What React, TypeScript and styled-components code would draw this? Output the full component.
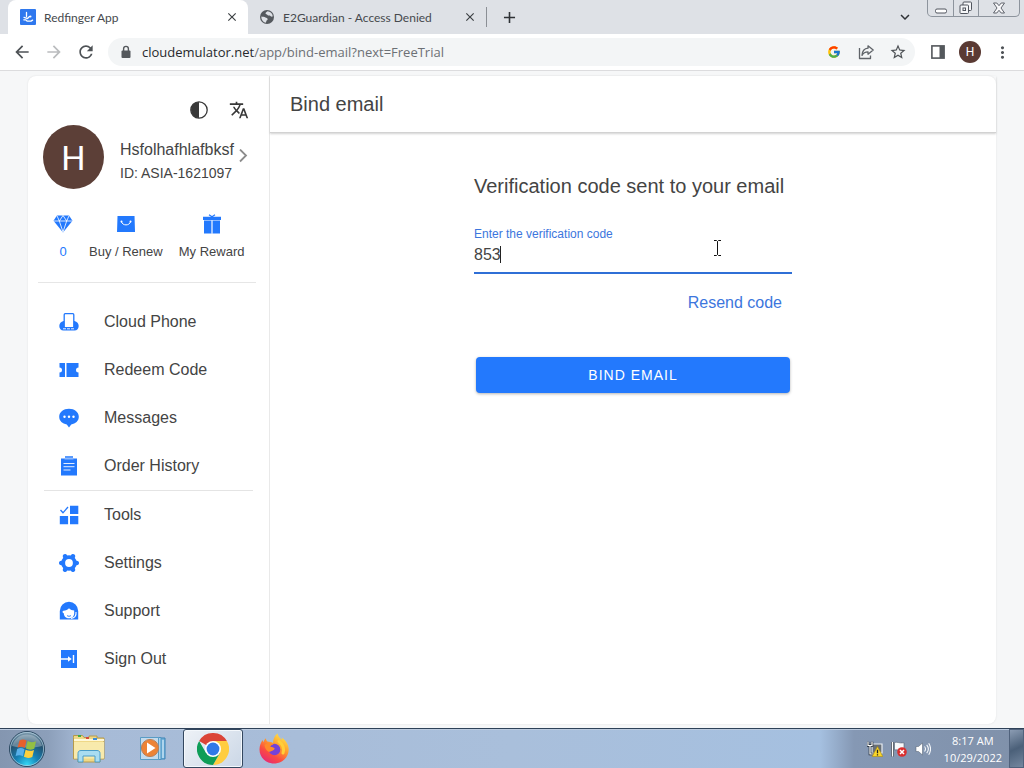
import React, { useState } from "react";
import styled, { createGlobalStyle } from "styled-components";
import {
  MdArrowBack,
  MdArrowForward,
  MdRefresh,
  MdStarBorder,
  MdMoreVert,
  MdTranslate,
  MdClose,
  MdAdd,
  MdKeyboardArrowDown,
} from "react-icons/md";
import { FcGoogle } from "react-icons/fc";

const BLUE = "#2379fd";
const UI_FONT = `"Open Sans", "Noto Sans", sans-serif`;

const GlobalStyle = createGlobalStyle`
  *, *::before, *::after { box-sizing: border-box; }
  body {
    margin: 0;
    color: #444444;
    font-family: "Liberation Sans", Arial, sans-serif;
    font-size: 16px;
  }
  button, input { font: inherit; color: inherit; border: 0; padding: 0; background: none; }
  a { text-decoration: none; color: inherit; }
  svg { display: block; flex: none; }
  h1, h2, p, ul { margin: 0; padding: 0; font-weight: 400; }
`;

const Screen = styled.div`
  display: flex;
  flex-direction: column;
  min-height: 100vh;
`;

/* Browser chrome */

const TabStrip = styled.div`
  display: flex;
  height: 34px;
  padding-left: 8px;
  background: #dee1e6;
  font-family: Lato, "Open Sans", sans-serif;
  font-size: 12px;
`;

const Tab = styled.div<{ $active?: boolean }>`
  display: flex;
  align-items: center;
  gap: 8px;
  width: ${(p) => (p.$active ? 240 : 238)}px;
  padding: 0 9px 0 ${(p) => (p.$active ? 12 : 11)}px;
  color: #46494d;
  background: ${(p) => (p.$active ? "#ffffff" : "transparent")};
  border-radius: 8px 8px 0 0;
`;

const TabTitle = styled.span`
  flex: 1;
  white-space: nowrap;
  overflow: hidden;
`;

const TabClose = styled.button`
  display: grid;
  place-items: center;
  width: 14px;
  height: 14px;
  color: #3c4043;
`;

const TabDivider = styled.span`
  align-self: center;
  width: 1px;
  height: 20px;
  background: #8b8f95;
`;

const StripButton = styled.button`
  display: grid;
  place-items: center;
  width: 44px;
  color: #2f3236;
`;

const StripSpacer = styled.div`
  flex: 1;
`;

const WindowControls = styled.div`
  display: flex;
  height: 17px;
  margin: 0 4px 0 0;
  border: 1px solid #8d949d;
  border-top: 0;
  border-radius: 0 0 5px 5px;
`;

const WindowButton = styled.button<{ $width: number }>`
  display: grid;
  place-items: center;
  width: ${(p) => p.$width}px;
  & + & {
    border-left: 1px solid #8d949d;
  }
`;

const Toolbar = styled.div`
  display: flex;
  align-items: center;
  height: 37px;
  padding: 0 6px;
  background: #ffffff;
  border-bottom: 1px solid #dcdcde;
`;

const ToolButton = styled.button<{ $faded?: boolean }>`
  display: grid;
  place-items: center;
  width: 32px;
  height: 28px;
  color: ${(p) => (p.$faded ? "#babcbe" : "#4e5256")};
`;

const Omnibox = styled.div`
  display: flex;
  flex: 1;
  align-items: center;
  height: 28px;
  margin: 0 7px 0 6px;
  padding: 0 1px 0 11px;
  border-radius: 14px;
  background: #f3f5f6;
  color: #5f6368;
`;

const Address = styled.p`
  flex: 1;
  margin-left: 9px;
  font-family: ${UI_FONT};
  font-size: 13px;
  line-height: 20px;
  color: #6c7075;
  b {
    font-weight: 400;
    color: #27292c;
  }
`;

const UserBadge = styled.span`
  display: grid;
  place-items: center;
  width: 22px;
  height: 22px;
  border-radius: 50%;
  background: #5a3a33;
  color: #ffffff;
  font-family: Roboto, sans-serif;
  font-size: 12px;
`;

/* Web page */

const Page = styled.div`
  display: flex;
  flex: 1;
  padding: 5px 28px 4px;
  background: #f6f7f8;
`;

const Card = styled.div`
  display: flex;
  flex: 1;
  border-radius: 8px;
  background: #ffffff;
  box-shadow: 0 0 2px rgba(0, 0, 0, 0.1);
`;

const Sidebar = styled.aside`
  width: 242px;
  padding-top: 24px;
  border-right: 1px solid #e9e9e9;
`;

const QuickActions = styled.div`
  display: flex;
  justify-content: flex-end;
  gap: 20px;
  padding-right: 20px;
`;

const IconButton = styled.button`
  display: grid;
  place-items: center;
  width: 20px;
  height: 20px;
`;

const Profile = styled.button`
  display: flex;
  align-items: center;
  width: 100%;
  margin-top: 5px;
  padding-left: 15px;
  text-align: left;
`;

const Avatar = styled.span`
  display: grid;
  place-items: center;
  width: 61px;
  height: 64px;
  padding-top: 2px;
  border-radius: 50%;
  background: #5c3f37;
  color: #ffffff;
  font-family: Roboto, sans-serif;
  font-size: 34px;
`;

const ProfileText = styled.span`
  display: flex;
  flex-direction: column;
  margin-left: 16px;
  padding-top: 8px;
  line-height: 24px;
  small {
    font-size: 14px;
    line-height: 22px;
  }
`;

const Stats = styled.div`
  display: flex;
  gap: 16px;
  margin: 25px 13px 0 10px;
  padding: 0 0 21px 15px;
  border-bottom: 1px solid #e6e6e6;
`;

const Stat = styled.a<{ $accent?: boolean }>`
  display: flex;
  flex-direction: column;
  align-items: center;
  gap: 9px;
  color: ${(p) => (p.$accent ? BLUE : "#444444")};
  font-size: 13px;
  line-height: 18px;
  white-space: nowrap;
`;

const NavList = styled.ul<{ $divided?: boolean }>`
  list-style: none;
  margin: ${(p) => (p.$divided ? "0" : "15px")} 16px 0;
  border-top: ${(p) => (p.$divided ? "1px solid #e4e4e4" : "0")};
`;

const NavLink = styled.a`
  display: flex;
  align-items: center;
  gap: 25px;
  height: 48px;
  padding-left: 15px;
`;

const Main = styled.main`
  flex: 1;
`;

const PageHeader = styled.header`
  display: flex;
  align-items: center;
  height: 57px;
  padding-left: 20px;
  border-bottom: 1px solid #d2d2d2;
  box-shadow: 0 1px 2px rgba(0, 0, 0, 0.18);
`;

const PageTitle = styled.h1`
  font-size: 20px;
  line-height: 28px;
`;

const Form = styled.form`
  display: flex;
  flex-direction: column;
  width: 318px;
  margin: 39px auto 0;
`;

const FormTitle = styled.h2`
  font-size: 20px;
  line-height: 28px;
  white-space: nowrap;
`;

const Field = styled.div`
  position: relative;
  display: flex;
  flex-direction: column;
  margin-top: 26px;
  border-bottom: 2px solid #2f6fd6;
`;

const FieldLabel = styled.label`
  color: #3c76dd;
  font-size: 12px;
  line-height: 16px;
`;

const CodeInput = styled.input`
  height: 30px;
  padding-bottom: 4px;
  outline: none;
  caret-color: transparent;
`;

const Caret = styled.span`
  position: absolute;
  left: 26px;
  top: 20px;
  width: 1px;
  height: 17px;
  background: #222222;
`;

const Pointer = styled.svg`
  position: absolute;
  left: 239px;
  top: 14px;
`;

const ResendLink = styled.a`
  align-self: flex-end;
  margin: 17px 10px 0 0;
  color: #3c76dd;
  line-height: 24px;
`;

const SubmitButton = styled.button`
  height: 36px;
  margin: 42px 2px 0;
  border-radius: 4px;
  background: ${BLUE};
  color: #ffffff;
  font-size: 14px;
  letter-spacing: 1px;
  box-shadow: 0 1px 3px rgba(0, 0, 0, 0.3);
`;

/* Desktop taskbar */

const Taskbar = styled.footer`
  display: flex;
  align-items: stretch;
  height: 40px;
  border-top: 1px solid #2e4158;
  background: linear-gradient(
    90deg,
    #8496b0 0,
    #8c9fba 48px,
    #a7bbd7 84px,
    #a9bfdb 50%,
    #a5c0e0 calc(100% - 204px),
    #8598b4 calc(100% - 170px),
    #8091aa 100%
  );
  box-shadow: inset 0 1px 0 #bccbdf;
`;

const TaskButton = styled.button<{ $width: number; $open?: boolean }>`
  display: grid;
  place-items: center;
  width: ${(p) => p.$width}px;
  border: ${(p) => (p.$open ? "1px solid #33475f" : "0")};
  border-radius: 3px;
  background: ${(p) =>
    p.$open ? "linear-gradient(135deg, #eef2f7, #cbd7e6)" : "none"};
  box-shadow: ${(p) => (p.$open ? "inset 0 0 0 1px #f4f8fc" : "none")};
`;

const Tray = styled.div`
  display: flex;
  align-items: center;
  gap: 8px;
  margin-left: auto;
  margin-right: 13px;
`;

const Clock = styled.time`
  display: flex;
  flex-direction: column;
  align-items: center;
  justify-content: center;
  margin-right: 7px;
  color: #ffffff;
  font-family: ${UI_FONT};
  font-size: 11px;
  line-height: 17px;
`;

const ShowDesktop = styled.button`
  width: 15px;
  border: 1px solid #50627c;
  background: linear-gradient(155deg, #8b9cb3, #4b6079 50%, #74879f);
`;

/* Drawings */

const icon20 = { width: 20, height: 20, viewBox: "0 0 20 20", fill: BLUE };

const AppFavicon = () => (
  <svg width="16" height="16" viewBox="0 0 16 16">
    <rect width="16" height="16" rx="1" fill="#2f78ee" />
    <path d="M6.500 3.500v4M4 8.300l3.500 1.200 2-2M3.800 10.800h2l1.300 1.300h4l1.500-1" stroke="#fff" strokeWidth="1.300" fill="none" strokeLinecap="round" />
    <circle cx="10.500" cy="7.500" r="1" fill="#fff" />
  </svg>
);

const Globe = () => (
  <svg width="16" height="16" viewBox="0 0 16 16">
    <circle cx="8" cy="8" r="7" fill="#55595e" />
    <path d="M8.500 2.300c2.800.3 5 2.300 5.300 5-1 .7-2.300.2-2.800-.8-.8-.2-1.800.3-2.500-.5-.6-.8-1.600-.6-2-1.500.1-1 1.200-1.300 2-2.200ZM2.300 7.500c1.500.2 3 .3 4.200 1 .8.6 2 .5 2.200 1.500 0 1-1.200 1.300-1.400 2.200-.1.600-.2 1.200-.8 1.500C4 13 2.100 10.800 2.300 7.500Z" fill="#dee1e6" />
  </svg>
);

const Padlock = () => (
  <svg width="14" height="14" viewBox="0 0 14 14">
    <rect x="2.500" y="5.500" width="9" height="7.500" rx="1" fill="#54585c" />
    <path d="M4.600 6V3.800a2.400 2.400 0 0 1 4.800 0V6" fill="none" stroke="#54585c" strokeWidth="1.400" />
  </svg>
);

const Share = () => (
  <svg width="18" height="18" viewBox="0 0 18 18" fill="none" stroke="#5f6368" strokeWidth="1.300" strokeLinejoin="round">
    <path d="M2.500 5v10.500h11v-3" />
    <path d="M11 2.800 16.200 7 11 11.200V8.800C8 8.800 6.200 10 5 12.400 5.200 8.400 7.200 5.600 11 5.200Z" />
  </svg>
);

const SidePanel = () => (
  <svg width="14" height="14" viewBox="0 0 14 14">
    <rect x="0.900" y="0.900" width="12.200" height="12.200" fill="none" stroke="#54585c" strokeWidth="1.600" />
    <path d="M8.500 1H13v12H8.500z" fill="#54585c" />
  </svg>
);

const Contrast = () => (
  <svg width="18" height="18" viewBox="0 0 18 18">
    <circle cx="9" cy="9" r="8.200" fill="none" stroke="#383838" strokeWidth="1.300" />
    <path d="M9 1a8 8 0 0 0 0 16Z" fill="#383838" />
  </svg>
);

const Diamond = () => (
  <svg {...icon20}>
    <path d="M4 1.500h12l3.500 5.300L10 18.500.5 6.800Z" />
    <path d="M.5 7h19M4 1.800 6.300 7 10 18 13.700 7 16 1.800M6.300 7 10 1.500 13.700 7" fill="none" stroke="#fff" strokeWidth="0.800" />
  </svg>
);

const Bag = () => (
  <svg {...icon20}>
    <path d="M1.500 2h17l.5 16H1Z" />
    <path d="M5.500 8c1 4 8 4 9 0" fill="none" stroke="#fff" strokeWidth="1" strokeLinecap="round" />
    <circle cx="5.500" cy="7.500" r="1" fill="#fff" />
    <circle cx="14.500" cy="7.500" r="1" fill="#fff" />
  </svg>
);

const Gift = () => (
  <svg {...icon20}>
    <path d="M1 2.800h18v3.200H1zM2 6.600h7.500V19.500H2zM10.500 6.600H18V19.500h-7.500z" />
    <path d="M7 .8 10 2.800 13 .8" fill="none" stroke={BLUE} strokeWidth="1.200" />
    <path d="M10 6v13.500" stroke="#b5d1ff" strokeWidth="1" />
  </svg>
);

const CloudPhone = () => (
  <svg {...icon20}>
    <path d="M4.500 9C2 9.500.3 11.500.3 14c0 2.600 1.700 4.500 4.200 4.500h11c2.500 0 4.200-1.900 4.200-4.500 0-2.500-1.700-4.500-4.200-5Z" />
    <rect x="5.200" y="1.700" width="9.600" height="14" rx="1" fill="#fff" stroke={BLUE} strokeWidth="1.300" />
    <path d="M4 16.800h12" stroke="#fff" strokeWidth="0.900" strokeDasharray="3 1" />
  </svg>
);

const Ticket = () => (
  <svg {...icon20}>
    <path d="M.5 3H6v14H.5v-4.500a2.500 2.500 0 0 0 0-5ZM7.500 3h12v4.500a2.500 2.500 0 0 0 0 5V17h-12Z" />
  </svg>
);

const Chat = () => (
  <svg {...icon20}>
    <path d="M10 .8c5.500 0 9.800 3.400 9.800 7.900 0 4.200-3.300 7-7.600 7.700L10 19.500l-2.200-3.100C3.500 15.700.2 12.900.2 8.700.2 4.200 4.500.8 10 .8Z" />
    <g fill="#fff"><circle cx="5.500" cy="8.700" r="1.200" /><circle cx="10" cy="8.700" r="1.200" /><circle cx="14.500" cy="8.700" r="1.200" /></g>
  </svg>
);

const Clipboard = () => (
  <svg {...icon20}>
    <path d="M2 2.500h16V19.500H2ZM6 .3h8v1.500H6Z" />
    <path d="M5.500 3h9" stroke="#8db9fe" strokeWidth="1" />
    <path d="M4.500 7.500h11M4.500 10.700h11M4.500 14h7" stroke="#e2edff" strokeWidth="1" />
  </svg>
);

const ToolsIcon = () => (
  <svg {...icon20}>
    <path d="M11 .8h8.300v8.300H11zM.8 11h8.300v8.300H.8zM11 11h8.300v8.300H11z" />
    <path d="M1.500 5 4 7.800 9 2" fill="none" stroke={BLUE} strokeWidth="1.300" />
  </svg>
);

const Gear = () => (
  <svg {...icon20}>
    <g stroke={BLUE} strokeWidth="4.500" strokeLinecap="round">
      <path d="M2.200 10h15.600M6.100 3.300l7.800 13.400M13.900 3.300 6.100 16.700" />
    </g>
    <circle cx="10" cy="10" r="7.800" />
    <circle cx="10" cy="10" r="3.900" fill="#fff" />
  </svg>
);

const SupportIcon = () => (
  <svg {...icon20}>
    <path d="M.8 18.500V10a9.200 9.200 0 0 1 18.400 0v8.500Z" />
    <path d="M10 7.200c1.500 1.500 3.300 2.100 5.200 2.300v2.700c0 3-2.300 5-5.200 5s-5.200-2-5.200-5c-1.500-.3-1.800-1.900-.4-2.500C6.800 9.500 8.700 8.800 10 7.200Z" fill="#fff" />
    <path d="M17 11c.5 4-1.500 6-5 6.400" fill="none" stroke="#fff" strokeWidth="1.100" />
    <path d="M8 14.500c1 1 3 1 4 0" fill="none" stroke={BLUE} strokeWidth="0.900" />
  </svg>
);

const ExitIcon = () => (
  <svg {...icon20}>
    <path d="M2 1h16v18H2z" />
    <path d="M2 10h9M14.500 6v8" stroke="#fff" strokeWidth="1.400" />
    <path d="M9 7.200 12.700 10 9 12.800Z" fill="#fff" />
  </svg>
);

const StartOrb = () => (
  <svg width="38" height="38" viewBox="0 0 38 38">
    <defs>
      <radialGradient id="orb" cx="50%" cy="95%" r="95%">
        <stop offset="0" stopColor="#35d8f5" />
        <stop offset="0.350" stopColor="#1581b5" />
        <stop offset="0.700" stopColor="#24516f" />
        <stop offset="1" stopColor="#8ba6b8" />
      </radialGradient>
    </defs>
    <circle cx="19" cy="19" r="17.500" fill="url(#orb)" stroke="#29465f" />
    <circle cx="19" cy="19" r="16.600" fill="none" stroke="#b5d3e3" strokeOpacity="0.700" />
    <path d="M4 16a15.500 15.500 0 0 1 30 0c-8 2-22 2-30 0Z" fill="#fff" opacity="0.300" />
    <path d="M11.500 10.500c2.500-1.500 4.500-1.500 7 0L16.800 18c-2.500-1.500-4.800-1.500-7.300-.2Z" fill="#e6602c" />
    <path d="M19.600 11c2.500 1.500 5.300 1.500 8.400.2L26.300 18.700c-3 1.300-5.600 1.300-8.400-.2Z" fill="#93bf43" />
    <path d="M9.200 19c2.500-1.300 4.800-1.200 7.300.2L14.900 26.300c-2.300-1.500-4.700-1.500-7.300-.2Z" fill="#58b0ea" />
    <path d="M17.600 19.700c2.800 1.500 5.400 1.500 8.400.2L24.300 27c-3 1.300-5.600 1.300-8.400-.2Z" fill="#fdd03c" />
  </svg>
);

const Explorer = () => (
  <svg width="34" height="30" viewBox="0 0 34 30">
    <path d="M1.500 3.500V1.500h9l1.500 2h5V2h8v2h7v21h-4V28H6v-3H1.500Z" fill="#efd887" stroke="#b59a4c" />
    <path d="M2 8h30v16.500H2Z" fill="#f8eaac" />
    <path d="M2 6h30" stroke="#fff8d8" strokeWidth="2" />
    <path d="M6 2h3" stroke="#3eaa42" strokeWidth="2" /><path d="M14 4h3" stroke="#d64a3c" strokeWidth="2" /><path d="M21 5h4" stroke="#3c8cd8" strokeWidth="2" />
    <path d="M6 28v-8.500c0-2 1-3 3-3h16c2 0 3 1 3 3V28h-5v-6H11v6Z" fill="#a9dcf1" stroke="#4a9cc8" />
  </svg>
);

const MediaPlayer = () => (
  <svg width="30" height="28" viewBox="0 0 30 28">
    <path d="M6 3h20v21H6Z" fill="#75b4dd" stroke="#3c83b4" />
    <path d="M4 2.500h18v22H4Z" fill="#abd3ec" stroke="#4d94c2" />
    <path d="M1.500 2.500h18v22h-18Z" fill="#c3dbed" stroke="#5a9cc5" />
    <path d="M24 5v18" stroke="#eaf6fd" />
    <circle cx="11" cy="13" r="8.600" fill="#ec8336" stroke="#b9805a" />
    <path d="m8 7.500 8.500 5.500L8 18.500Z" fill="#fff" />
  </svg>
);

const ChromeLogo = () => (
  <svg width="32" height="32" viewBox="0 0 32 32">
    <path d="M16 16 2.140 8A16 16 0 0 1 29.860 8H16Z" fill="#db4437" />
    <path d="M16 8h13.860A16 16 0 0 1 16 32l6.930-12Z" fill="#ffcd40" />
    <path d="M2.140 8A16 16 0 0 0 16 32l6.930-12H9.070Z" fill="#0f9d58" />
    <circle cx="16" cy="16" r="8" fill="#fff" />
    <circle cx="16" cy="16" r="6.400" fill="#3079e8" />
  </svg>
);

const FirefoxLogo = () => (
  <svg width="30" height="31" viewBox="0 0 30 31">
    <defs>
      <linearGradient id="fox" x1="0.850" y1="0.050" x2="0.250" y2="1">
        <stop offset="0" stopColor="#ffe84a" />
        <stop offset="0.400" stopColor="#ff9a2d" />
        <stop offset="0.700" stopColor="#fb4b42" />
        <stop offset="1" stopColor="#e52877" />
      </linearGradient>
    </defs>
    <path d="M18.500.5c.5 3 2.500 4.500 4.500 6.500 0-1 0-1.500-.3-2.500 4.500 3 7 7.500 7 12C29.700 24.500 23 30.500 15 30.500S.5 24.500.5 16.500c0-4 1.500-7 3-9.500l.8 2.200c.6-1.500 1.500-3 2.700-4 0 1.500.5 2.600 1.500 3.300 2 .1 4 .5 5.500 1.500C14 6.500 15.500 2.500 18.500.5Z" fill="url(#fox)" />
    <circle cx="15.500" cy="16.500" r="5.800" fill="#7542d8" />
    <path d="M5.500 12c2.500-2.500 7-2 9-.5-2.500.5-3 1.500-3 2.500 2 0 4 .6 4.200 1.500-.5 2-3 2-4.200 3-2 1.500-5.500-2-6-6.500Z" fill="#ff8a2b" />
    <path d="M20 8.500c4 3 5.500 7 4 11.500" stroke="#ffcf3a" strokeWidth="3" fill="none" strokeLinecap="round" />
  </svg>
);

const NetworkIcon = () => (
  <svg width="16" height="16" viewBox="0 0 16 16">
    <path d="M5 3h10v9H5Z" fill="#687078" stroke="#e9eef3" strokeWidth="1.200" />
    <path d="M1 .8v3.700h4V.8M3 4.500V13h4" fill="none" stroke="#222b36" strokeWidth="2.600" />
    <path d="M1 .8v3.700h4V.8M3 4.500V13h4" fill="none" stroke="#fff" strokeWidth="1.200" />
    <path d="M10.500 5.500 15.800 15.500H5.200Z" fill="#fbd72b" stroke="#a98a10" strokeWidth="0.600" />
    <path d="M10.500 8.800v3.400M10.500 13.200v1.300" stroke="#222" strokeWidth="1.300" />
  </svg>
);

const FlagIcon = () => (
  <svg width="16" height="16" viewBox="0 0 16 16">
    <path d="M1.500 1v14.500" stroke="#333d4a" strokeWidth="3" />
    <path d="M1.500 1v14.500" stroke="#fff" strokeWidth="1.500" />
    <path d="M3.500 1.500C6 .5 8 2.500 13 1.800v7c-4 1-6.500-.5-9.500.2Z" fill="#f7f9fb" stroke="#4d5a6b" strokeWidth="0.600" />
    <circle cx="11" cy="11" r="4.800" fill="#d92f2f" />
    <path d="m9 9 4 4m0-4-4 4" stroke="#fff" strokeWidth="1.500" />
  </svg>
);

const VolumeIcon = () => (
  <svg width="16" height="16" viewBox="0 0 16 16" fill="none" stroke="#f5f8fb">
    <path d="M1 5.500h2.500L7.500 2v12l-4-3.500H1Z" fill="#fff" stroke="#4d5a6b" strokeWidth="0.500" />
    <path d="M9.500 5.500c1.200 1.500 1.200 3.500 0 5M11.700 3.800c2 2.500 2 5.900 0 8.400M13.700 2.300c2.300 3.500 2.300 7.900 0 11.400" strokeWidth="1.100" />
  </svg>
);

const primaryLinks = [
  { label: "Cloud Phone", Icon: CloudPhone },
  { label: "Redeem Code", Icon: Ticket },
  { label: "Messages", Icon: Chat },
  { label: "Order History", Icon: Clipboard },
];

const secondaryLinks = [
  { label: "Tools", Icon: ToolsIcon },
  { label: "Settings", Icon: Gear },
  { label: "Support", Icon: SupportIcon },
  { label: "Sign Out", Icon: ExitIcon },
];

type LinkItem = { label: string; Icon: () => React.ReactElement };

const Nav = ({ items, divided }: { items: LinkItem[]; divided?: boolean }) => (
  <NavList $divided={divided}>
    {items.map(({ label, Icon }) => (
      <li key={label}>
        <NavLink href="#">
          <Icon />
          {label}
        </NavLink>
      </li>
    ))}
  </NavList>
);

const BrowserChrome = () => (
  <>
    <TabStrip>
      <Tab $active>
        <AppFavicon />
        <TabTitle>Redfinger App</TabTitle>
        <TabClose aria-label="Close tab"><MdClose size={14} /></TabClose>
      </Tab>
      <Tab>
        <Globe />
        <TabTitle>E2Guardian - Access Denied</TabTitle>
        <TabClose aria-label="Close tab"><MdClose size={14} /></TabClose>
      </Tab>
      <TabDivider />
      <StripButton aria-label="New tab"><MdAdd size={19} /></StripButton>
      <StripSpacer />
      <StripButton aria-label="Search tabs"><MdKeyboardArrowDown size={18} /></StripButton>
      <WindowControls>
        <WindowButton $width={25} aria-label="Minimize">
          <svg width="12" height="14" viewBox="0 0 12 14"><rect x="0.500" y="8" width="11" height="4" rx="1.500" fill="#fff" stroke="#50555e" /></svg>
        </WindowButton>
        <WindowButton $width={25} aria-label="Restore">
          <svg width="14" height="14" viewBox="0 0 14 14" fill="#f5f6f8" stroke="#50555e">
            <rect x="4" y="1" width="8.500" height="8.500" rx="1" />
            <rect x="1" y="4" width="8.500" height="8.500" rx="1" />
            <rect x="4" y="7" width="2.500" height="2.500" />
          </svg>
        </WindowButton>
        <WindowButton $width={41} aria-label="Close">
          <svg width="14" height="12" viewBox="0 0 14 12"><path d="M1.500 1h3.300L7 3.700 9.200 1h3.300L9 6l3.500 5H9.200L7 8.300 4.800 11H1.500L5 6Z" fill="#f8f8fa" stroke="#50555e" strokeWidth="0.900" /></svg>
        </WindowButton>
      </WindowControls>
    </TabStrip>
    <Toolbar>
      <ToolButton aria-label="Back"><MdArrowBack size={20} /></ToolButton>
      <ToolButton aria-label="Forward" $faded><MdArrowForward size={20} /></ToolButton>
      <ToolButton aria-label="Reload"><MdRefresh size={20} /></ToolButton>
      <Omnibox>
        <Padlock />
        <Address><b>cloudemulator.net</b>/app/bind-email?next=FreeTrial</Address>
        <ToolButton aria-label="Search with Google"><FcGoogle size={14} /></ToolButton>
        <ToolButton aria-label="Share"><Share /></ToolButton>
        <ToolButton aria-label="Bookmark"><MdStarBorder size={18} /></ToolButton>
      </Omnibox>
      <ToolButton aria-label="Side panel"><SidePanel /></ToolButton>
      <ToolButton aria-label="Account"><UserBadge>H</UserBadge></ToolButton>
      <ToolButton aria-label="Menu"><MdMoreVert size={19} /></ToolButton>
    </Toolbar>
  </>
);

const BindEmailForm = () => {
  const [code, setCode] = useState("853");
  return (
    <Form onSubmit={(e) => e.preventDefault()}>
      <FormTitle>Verification code sent to your email</FormTitle>
      <Field>
        <FieldLabel htmlFor="code">Enter the verification code</FieldLabel>
        <CodeInput id="code" value={code} onChange={(e) => setCode(e.target.value)} />
        <Caret />
        <Pointer width="9" height="16" viewBox="0 0 9 16">
          <path d="M1 .5h2.500l1 1 1-1H8M4.500 1.500v13M1 15.500h2.500l1-1 1 1H8" fill="none" stroke="#111" />
        </Pointer>
      </Field>
      <ResendLink href="#">Resend code</ResendLink>
      <SubmitButton type="submit">BIND EMAIL</SubmitButton>
    </Form>
  );
};

export default function App() {
  return (
    <Screen>
      <GlobalStyle />
      <BrowserChrome />
      <Page>
        <Card>
          <Sidebar>
            <QuickActions>
              <IconButton aria-label="Theme"><Contrast /></IconButton>
              <IconButton aria-label="Language"><MdTranslate size={20} color="#383838" /></IconButton>
            </QuickActions>
            <Profile>
              <Avatar>H</Avatar>
              <ProfileText>
                Hsfolhafhlafbksf
                <small>ID: ASIA-1621097</small>
              </ProfileText>
              <svg width="18" height="16" viewBox="0 0 18 16"><path d="m6 .5 6 6-6 6" fill="none" stroke="#8c8c8c" strokeWidth="1.800" /></svg>
            </Profile>
            <Stats>
              <Stat href="#" $accent><Diamond />0</Stat>
              <Stat href="#"><Bag />Buy / Renew</Stat>
              <Stat href="#"><Gift />My Reward</Stat>
            </Stats>
            <nav>
              <Nav items={primaryLinks} />
              <Nav items={secondaryLinks} divided />
            </nav>
          </Sidebar>
          <Main>
            <PageHeader><PageTitle>Bind email</PageTitle></PageHeader>
            <BindEmailForm />
          </Main>
        </Card>
      </Page>
      <Taskbar>
        <TaskButton $width={54} aria-label="Start"><StartOrb /></TaskButton>
        <TaskButton $width={70} aria-label="File Explorer"><Explorer /></TaskButton>
        <TaskButton $width={59} aria-label="Media Player"><MediaPlayer /></TaskButton>
        <TaskButton $width={60} $open aria-label="Chrome"><ChromeLogo /></TaskButton>
        <TaskButton $width={62} aria-label="Firefox"><FirefoxLogo /></TaskButton>
        <Tray><NetworkIcon /><FlagIcon /><VolumeIcon /></Tray>
        <Clock><span>8:17 AM</span><span>10/29/2022</span></Clock>
        <ShowDesktop aria-label="Show desktop" />
      </Taskbar>
    </Screen>
  );
}
